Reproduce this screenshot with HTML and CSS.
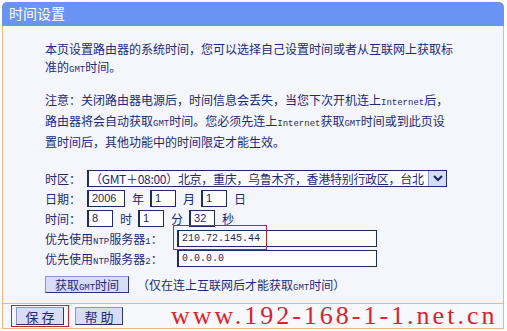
FILE: index.html
```html
<!DOCTYPE html>
<html lang="zh-CN">
<head>
  <meta charset="UTF-8">
  <meta name="viewport" content="width=device-width, initial-scale=1.0">
  <title>时间设置</title>
  <link rel="stylesheet" href="styles.css">
</head>
<body>
  <div class="panel">
    <div class="title">时间设置</div>
    <div class="content">
      <p class="intro">本页设置路由器的系统时间，您可以选择自己设置时间或者从互联网上获取标<br>准的<span class="lat">GMT</span>时间。</p>
      <p class="note">注意：关闭路由器电源后，时间信息会丢失，当您下次开机连上<span class="lat">Internet</span>后，<br>路由器将会自动获取<span class="lat">GMT</span>时间。您必须先连上<span class="lat">Internet</span>获取<span class="lat">GMT</span>时间或到此页设<br>置时间后，其他功能中的时间限定才能生效。</p>

      <div class="form">
        <div class="row">
          <span class="label">时区：</span>
          <div class="select">
            <span class="select-text">（GMT＋08:00）北京，重庆，乌鲁木齐，香港特别行政区，台北</span>
            <span class="arrow">
              <svg width="12" height="8" viewBox="0 0 12 8"><path d="M2 2 L6 6 L10 2" fill="none" stroke="#1c2660" stroke-width="2.2"/></svg>
            </span>
          </div>
        </div>
        <div class="row">
          <span class="label">日期：</span>
          <input class="box box-year" value="2006">
          <span class="unit">年</span>
          <input class="box" value="1">
          <span class="unit">月</span>
          <input class="box" value="1">
          <span class="unit">日</span>
        </div>
        <div class="row">
          <span class="label">时间：</span>
          <input class="box" value="8">
          <span class="unit">时</span>
          <input class="box" value="1">
          <span class="unit">分</span>
          <input class="box" value="32">
          <span class="unit">秒</span>
        </div>
        <div class="row ntp-row">
          <span class="label label-wide">优先使用<span class="lat">NTP</span>服务器<span class="lat">1</span>：</span>
          <input class="box box-ip" value="210.72.145.44">
          <span class="mark"></span>
        </div>
        <div class="row">
          <span class="label label-wide">优先使用<span class="lat">NTP</span>服务器<span class="lat">2</span>：</span>
          <input class="box box-ip" value="0.0.0.0">
        </div>
        <div class="row row-btn">
          <button class="btn btn-gmt">获取<span class="lat">GMT</span>时间</button>
          <span class="hint">（仅在连上互联网后才能获取<span class="lat">GMT</span>时间）</span>
        </div>
      </div>
    </div>
    <div class="footer">
      <span class="ring"><button class="btn btn-foot">保 存</button></span>
      <button class="btn btn-foot">帮 助</button>
      <span class="watermark">www.192-168-1-1.net.cn</span>
    </div>
  </div>
</body>
</html>
```

FILE: styles.css
```css
* {
  box-sizing: border-box;
}

body {
  margin: 0;
  padding: 2px 3px 0 2px;
  background: #fff;
  font-family: "Noto Sans CJK SC", "Noto Sans", sans-serif;
  font-size: 12px;
  color: #1b2a7c;
}

.panel {
  width: 502px;
}

.title {
  height: 24px;
  line-height: 23px;
  padding-left: 7px;
  background: #6a94f4;
  color: #fff;
  font-size: 14px;
  border-radius: 5px 5px 0 0;
}

.content {
  background: #f5f6fb;
  border-left: 1px solid #f2b57c;
  border-right: 1px solid #f2b57c;
  padding: 14px 0 18px 42px;
  height: 277px;
}

p {
  margin: 0;
  line-height: 18px;
  white-space: nowrap;
}

.note {
  margin-top: 12px;
}

.lat {
  font-family: "Liberation Mono", monospace;
  font-size: 9px;
}

.form {
  margin-top: 17px;
}

.row {
  display: flex;
  align-items: center;
  height: 20px;
}

.label {
  width: 42px;
  white-space: nowrap;
}

.label-wide {
  width: 132px;
}

.select {
  display: flex;
  align-items: center;
  width: 360px;
  height: 17px;
  background: #fff;
  border: 1px solid #1e2c66;
  border-left-width: 2px;
}

.select-text {
  flex: 1;
  padding-left: 1px;
  letter-spacing: -0.3px;
  white-space: nowrap;
  overflow: hidden;
}

.arrow {
  display: flex;
  align-items: center;
  justify-content: center;
  width: 18px;
  height: 15px;
  background: #d4ddf4;
  border-left: 1px solid #8a9ad0;
}

.box {
  width: 26px;
  height: 17px;
  padding: 0 0 0 3px;
  border: 1px solid #1e2c66;
  border-left-width: 2px;
  background: #fff;
  font-family: "Liberation Sans", sans-serif;
  font-size: 11px;
  color: #1b2a5a;
  outline: none;
}

.box-year {
  width: 38px;
}

.unit {
  margin: 0 6px 0 7px;
}

.box-ip {
  width: 200px;
  font-family: "Liberation Mono", monospace;
  font-size: 10px;
}

.ntp-row {
  position: relative;
}

.mark {
  position: absolute;
  left: 128px;
  top: -3px;
  width: 94px;
  height: 25px;
  border: 1px solid #c4262c;
}

.row-btn {
  margin-top: 6px;
}

.btn {
  height: 17px;
  padding: 0;
  background: #d8dcf5;
  border: 1px solid #2b3372;
  border-top-color: #8c94c8;
  border-left-color: #8c94c8;
  font-family: "Noto Sans CJK SC", sans-serif;
  font-size: 12px;
  color: #1b2a7c;
  line-height: 15px;
}

.btn-gmt {
  width: 84px;
}

.hint {
  margin-left: 8px;
}

.footer {
  display: flex;
  align-items: center;
  height: 26px;
  padding-left: 8px;
  background: #f7f8fc;
  border: 1px solid #f2b57c;
}

.ring {
  display: flex;
  padding: 1px 4px 1px 4px;
  border: 1px solid #c4262c;
}

.btn-foot {
  width: 48px;
  height: 18px;
  font-size: 13px;
}

.ring + .btn-foot {
  margin-left: 6px;
}

.watermark {
  margin-left: 48px;
  font-family: "Liberation Serif", serif;
  font-size: 26px;
  letter-spacing: 3px;
  color: #e0202a;
  white-space: nowrap;
  line-height: 24px;
}
```
